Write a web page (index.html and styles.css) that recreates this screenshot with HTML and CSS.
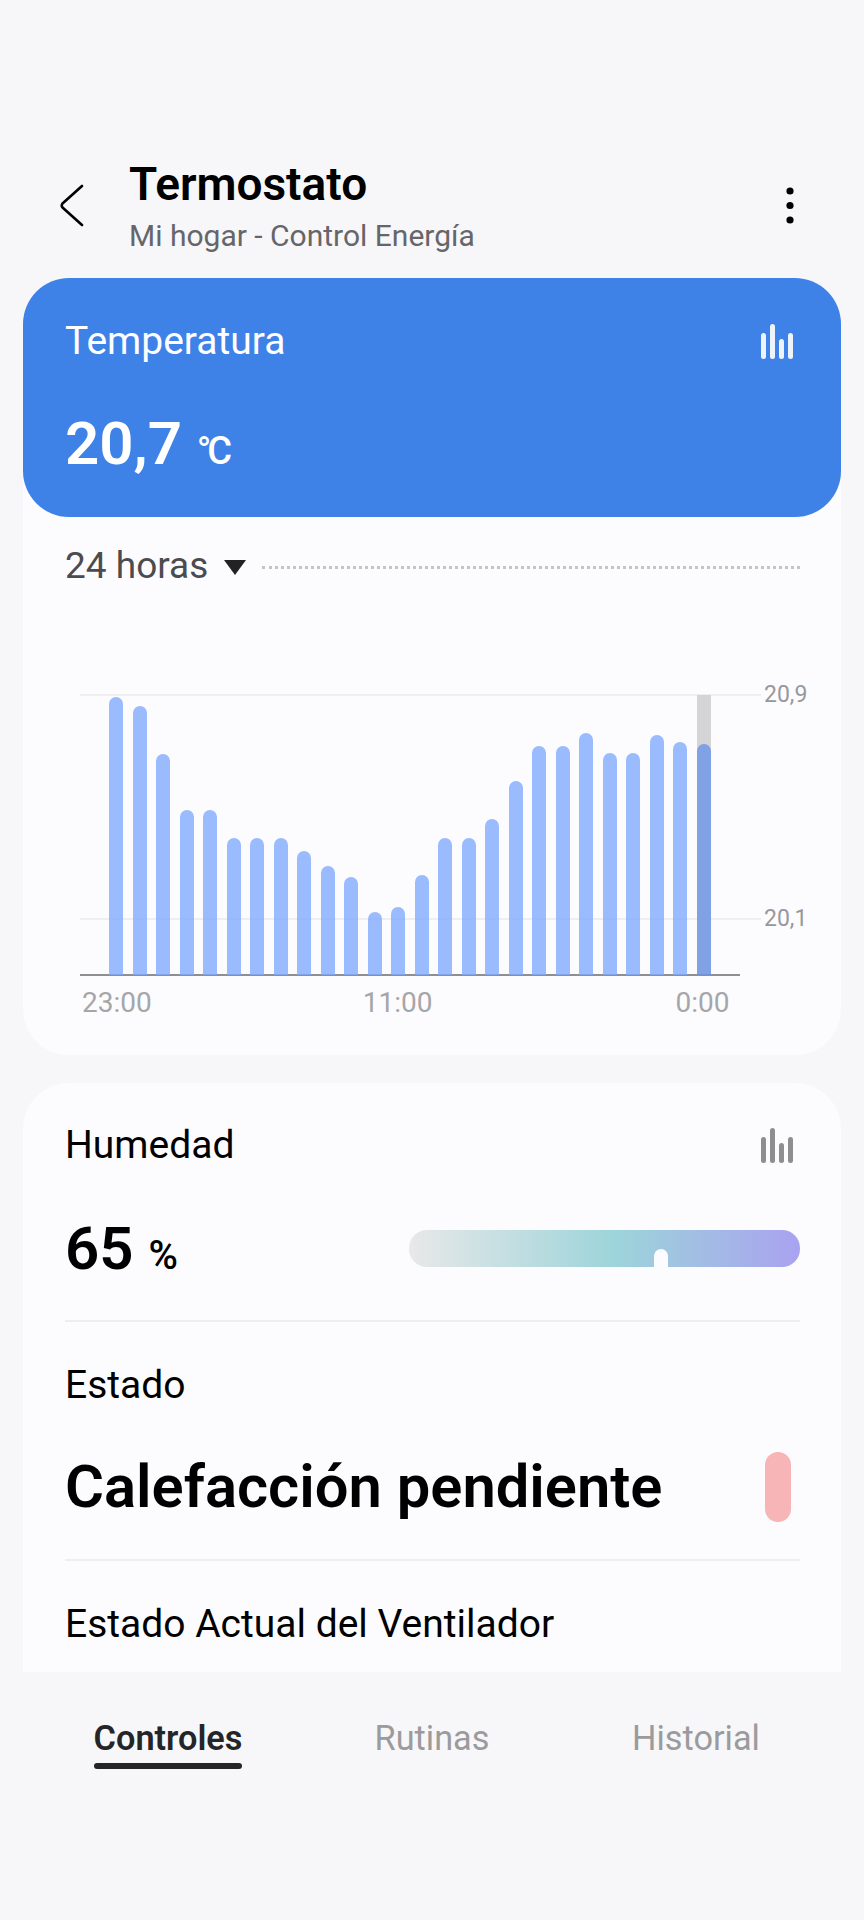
FILE: index.html
```html
<!DOCTYPE html>
<html lang="es">
<head>
    <meta charset="UTF-8">
    <meta name="viewport" content="width=device-width, initial-scale=1.0">
    <title>Termostato</title>
    <link rel="stylesheet" href="styles.css">
</head>
<body>
    <header class="top">
        <svg class="back" viewBox="0 0 24 43" width="24" height="43"><path d="M22 2 L2.5 19.5 Q1 21.5 2.5 23.5 L22 41" fill="none" stroke="#000" stroke-width="2.6" stroke-linecap="round" stroke-linejoin="round"/></svg>
        <div class="top-text">
            <h1>Termostato</h1>
            <p>Mi hogar - Control Energía</p>
        </div>
        <svg class="more" viewBox="0 0 8 37" width="8" height="37"><circle cx="4" cy="4" r="3.6"/><circle cx="4" cy="18.5" r="3.6"/><circle cx="4" cy="33" r="3.6"/></svg>
    </header>

    <main class="content">
        <section class="card temp-card">
            <div class="temp-head">
                <div class="row">
                    <span class="label">Temperatura</span>
                    <svg class="bars-icon" viewBox="0 0 32 35" width="32" height="35"><rect x="0" y="9" width="5" height="26" rx="2.5"/><rect x="9" y="0" width="5" height="35" rx="2.5"/><rect x="18" y="15" width="5" height="20" rx="2.5"/><rect x="27" y="9" width="5" height="26" rx="2.5"/></svg>
                </div>
                <div class="value temp-value">20,7 <small class="deg">°C</small></div>
            </div>

            <div class="range">
                <span>24 horas</span>
                <i class="arrow"></i>
                <i class="dots"></i>
            </div>

            <div class="chart">
                <div class="plot">
                    <div class="grid grid-top"><span>20,9</span></div>
                    <div class="grid grid-low"><span>20,1</span></div>
                    <div class="now-bg"></div>
                    <div class="bars">
                        <div class="bar" style="height:278px"></div>
                        <div class="bar" style="height:269px"></div>
                        <div class="bar" style="height:221px"></div>
                        <div class="bar" style="height:165px"></div>
                        <div class="bar" style="height:165px"></div>
                        <div class="bar" style="height:137px"></div>
                        <div class="bar" style="height:137px"></div>
                        <div class="bar" style="height:137px"></div>
                        <div class="bar" style="height:124px"></div>
                        <div class="bar" style="height:109px"></div>
                        <div class="bar" style="height:98px"></div>
                        <div class="bar" style="height:63px"></div>
                        <div class="bar" style="height:68px"></div>
                        <div class="bar" style="height:100px"></div>
                        <div class="bar" style="height:137px"></div>
                        <div class="bar" style="height:137px"></div>
                        <div class="bar" style="height:156px"></div>
                        <div class="bar" style="height:194px"></div>
                        <div class="bar" style="height:229px"></div>
                        <div class="bar" style="height:229px"></div>
                        <div class="bar" style="height:242px"></div>
                        <div class="bar" style="height:222px"></div>
                        <div class="bar" style="height:222px"></div>
                        <div class="bar" style="height:240px"></div>
                        <div class="bar" style="height:233px"></div>
                        <div class="bar bar-now" style="height:231px"></div>
                    </div>
                </div>
                <div class="times">
                    <span>23:00</span>
                    <span class="time-mid">11:00</span>
                    <span class="time-end">0:00</span>
                </div>
            </div>
        </section>

        <section class="card info-card">
            <div class="row">
                <span class="label">Humedad</span>
                <svg class="bars-icon grey" viewBox="0 0 32 35" width="32" height="35"><rect x="0" y="9" width="5" height="26" rx="2.5"/><rect x="9" y="0" width="5" height="35" rx="2.5"/><rect x="18" y="15" width="5" height="20" rx="2.5"/><rect x="27" y="9" width="5" height="26" rx="2.5"/></svg>
            </div>
            <div class="row hum-row">
                <div class="value">65 <small>%</small></div>
                <div class="hum-bar"><i class="hum-mark"></i></div>
            </div>
            <hr>
            <div class="label state-label">Estado</div>
            <div class="row state-row">
                <span class="state">Calefacción pendiente</span>
                <i class="state-pill"></i>
            </div>
            <hr>
            <div class="label fan-label">Estado Actual del Ventilador</div>
        </section>
    </main>

    <nav class="tabs">
        <a class="active" href="#"><span>Controles</span></a>
        <a href="#"><span>Rutinas</span></a>
        <a href="#"><span>Historial</span></a>
    </nav>
</body>
</html>
```

FILE: styles.css
```css
html, body {
    margin: 0;
    padding: 0;
}

body {
    width: 864px;
    height: 1920px;
    overflow: hidden;
    display: flex;
    flex-direction: column;
    font-family: Roboto, "Noto Sans", sans-serif;
    background-color: #f7f7f9;
    color: #000;
}

.top {
    height: 278px;
    box-sizing: border-box;
    padding: 154px 70px 0 60px;
    display: flex;
    align-items: flex-start;
    flex-shrink: 0;
}

.back {
    margin-top: 30px;
}

.top-text {
    flex: 1;
    margin-left: 45px;
}

.top h1 {
    margin: 0;
    font-size: 46px;
    line-height: 60px;
    font-weight: 600;
}

.top p {
    margin: 0;
    font-size: 30px;
    line-height: 44px;
    color: #66666a;
}

.more {
    margin-top: 33px;
}

.content {
    height: 1394px;
    flex-shrink: 0;
    overflow: hidden;
    padding: 0 23px;
}

.card {
    background-color: #fcfcff;
    border-radius: 46px;
}

.temp-card {
    height: 777px;
    margin-bottom: 28px;
}

.temp-head {
    height: 239px;
    box-sizing: border-box;
    padding: 37px 48px 0 42px;
    background-color: #3e82e8;
    border-radius: 46px;
    color: #fff;
}

.row {
    display: flex;
    align-items: center;
    justify-content: space-between;
}

.label {
    font-size: 39px;
    line-height: 52px;
}

.bars-icon {
    fill: #eef3fb;
}

.bars-icon.grey {
    fill: #8e8e90;
}

.value {
    font-size: 60px;
    line-height: 76px;
    font-weight: 600;
}

.value small {
    font-size: 40px;
    font-weight: 500;
}

.value .deg {
    font-size: 38px;
    letter-spacing: -4px;
}

.temp-value {
    margin-top: 39px;
}

.range {
    display: flex;
    align-items: center;
    height: 100px;
    padding: 0 41px 0 42px;
    font-size: 37px;
    color: #4c4c50;
}

.range span {
    margin-bottom: 4px;
}

.arrow {
    width: 0;
    height: 0;
    margin-left: 16px;
    border-left: 11px solid transparent;
    border-right: 11px solid transparent;
    border-top: 15px solid #222;
}

.dots {
    flex: 1;
    margin-left: 16px;
    border-top: 3px dotted #c4c4c8;
}

.chart {
    padding: 78px 0 0 57px;
}

.plot {
    position: relative;
    width: 660px;
    height: 281px;
}

.grid {
    position: absolute;
    left: 0;
    width: 681px;
    height: 2px;
    background-color: #efeff2;
}

.grid span {
    position: absolute;
    left: 684px;
    top: -14px;
    font-size: 23px;
    line-height: 30px;
    color: #98989c;
}

.grid-top {
    top: -1px;
}

.grid-low {
    top: 223px;
}

.now-bg {
    position: absolute;
    left: 617px;
    top: 0;
    bottom: 0;
    width: 14px;
    background-color: #d4d4d6;
}

.bars {
    position: relative;
    height: 100%;
    box-sizing: border-box;
    padding-left: 29px;
    display: flex;
    align-items: flex-end;
    gap: 9.5px;
    border-bottom: 2px solid #8f8f92;
}

.bar {
    width: 14px;
    margin-bottom: -1px;
    border-radius: 7px 7px 0 0;
    background-color: rgba(130, 170, 255, 0.8);
}

.bar-now {
    background-color: rgba(108, 148, 232, 0.8);
}

.times {
    display: flex;
    padding-left: 2px;
    margin-top: 10px;
    font-size: 28px;
    line-height: 34px;
    color: #a6a6a8;
}

.time-mid {
    margin-left: 211px;
}

.time-end {
    margin-left: 243px;
}

.info-card {
    height: 700px;
    box-sizing: border-box;
    padding: 36px 41px 0 42px;
}

.info-card .row .bars-icon {
    margin-right: 7px;
}

.hum-row {
    margin-top: 40px;
}

.hum-bar {
    position: relative;
    width: 391px;
    height: 37px;
    margin-bottom: 9px;
    border-radius: 18px;
    background: linear-gradient(to right, #e8e8e8 0%, #9cd4da 53%, #a9a2f0 100%);
}

.hum-mark {
    position: absolute;
    left: 245px;
    bottom: 0;
    width: 14px;
    height: 18px;
    border-radius: 7px 7px 0 0;
    background-color: #fcfcff;
}

hr {
    margin: 0;
    border: 0;
    height: 2px;
    background-color: #eeeef1;
}

.hum-row + hr {
    margin-top: 26px;
}

.state-label {
    margin-top: 37px;
}

.state-row {
    margin-top: 36px;
    padding-right: 9px;
}

.state {
    font-size: 59.7px;
    line-height: 80px;
    font-weight: 600;
}

.state-pill {
    width: 26px;
    height: 70px;
    border-radius: 13px;
    background-color: #f7b5b7;
}

.state-row + hr {
    margin-top: 32px;
}

.fan-label {
    margin-top: 37px;
}

.tabs {
    display: flex;
    padding: 44px 36px 0;
}

.tabs a {
    flex: 1;
    text-align: center;
    font-size: 34.3px;
    line-height: 44px;
    color: #9b9b9e;
    text-decoration: none;
}

.tabs span {
    display: inline-block;
}

.tabs .active {
    color: #252528;
    font-weight: 600;
}

.tabs .active span::after {
    content: "";
    display: block;
    height: 6px;
    margin-top: 3px;
    border-radius: 3px;
    background-color: #252528;
}
```
